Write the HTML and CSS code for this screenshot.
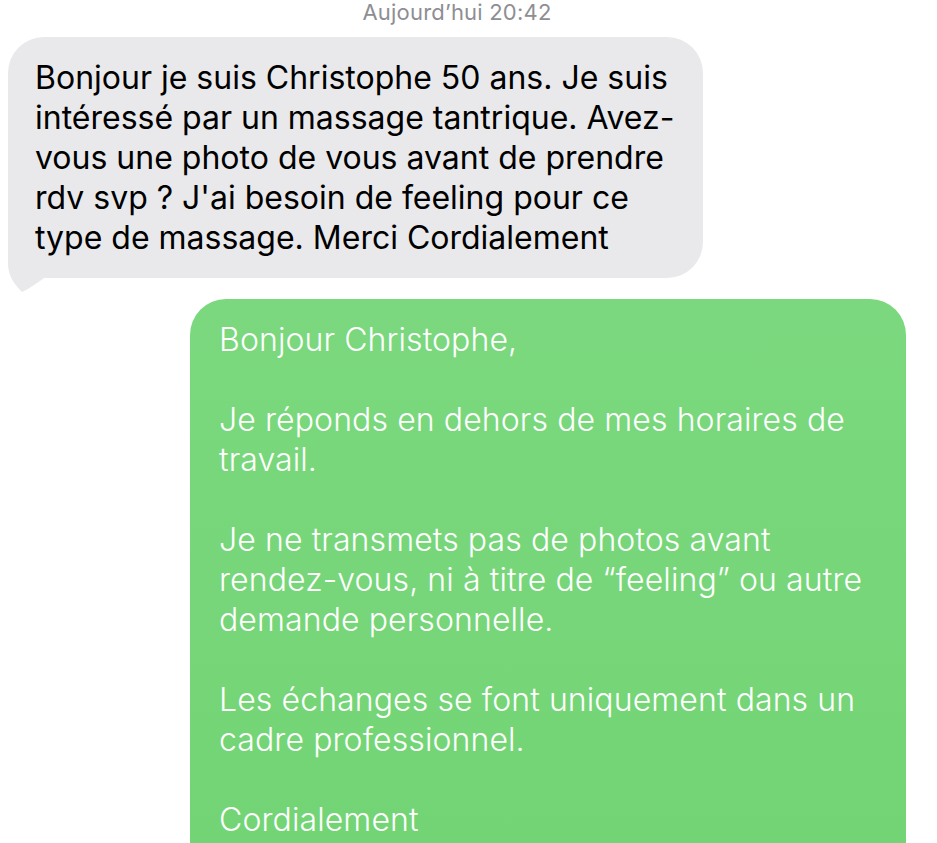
FILE: index.html
```html
<!DOCTYPE html>
<html lang="fr">
<head>
    <meta charset="UTF-8">
    <meta name="viewport" content="width=device-width, initial-scale=1.0">
    <title>Messages</title>
    <link rel="stylesheet" href="styles.css">
</head>
<body>
    <div class="thread">
        <div class="timestamp">Aujourd’hui 20:42</div>

        <div class="bubble received">
            <svg class="tail" width="50" height="40" viewBox="0 0 50 40">
                <path d="M0 0 L0 12 C0 24 7 33 14 40 C21 37 29 31 36 26 L50 26 L50 0 Z" fill="#e9e9eb"/>
            </svg>
            <p>Bonjour je suis Christophe 50 ans. Je suis<br>intéressé par un massage tantrique. Avez-<br>vous une photo de vous avant de prendre<br>rdv svp ? J'ai besoin de feeling pour ce<br>type de massage. Merci Cordialement</p>
        </div>

        <div class="bubble sent">
            <p>Bonjour Christophe,</p>
            <p>Je réponds en dehors de mes horaires de<br>travail.</p>
            <p>Je ne transmets pas de photos avant<br>rendez-vous, ni à titre de “feeling” ou autre<br>demande personnelle.</p>
            <p>Les échanges se font uniquement dans un<br>cadre professionnel.</p>
            <p>Cordialement</p>
        </div>
    </div>
</body>
</html>
```

FILE: styles.css
```css
body {
    margin: 0;
    padding: 0;
    height: 843px;
    overflow: hidden;
    background-color: #fff;
    font-family: 'Inter', 'Noto Sans', sans-serif;
}

.thread {
    display: flex;
    flex-direction: column;
    padding: 0 31px 0 8px;
}

.timestamp {
    align-self: center;
    height: 37px;
    line-height: 25px;
    font-size: 22px;
    color: #8e8e93;
    letter-spacing: 0.2px;
}

.bubble {
    position: relative;
    box-sizing: border-box;
    border-radius: 36px;
    font-size: 32px;
    line-height: 40px;
}

.bubble p {
    position: relative;
    margin: 0;
}

.bubble p + p {
    margin-top: 40px;
}

.received {
    align-self: flex-start;
    width: 695px;
    padding: 21px 10px 20px 27px;
    background-color: #e9e9eb;
    color: #000;
    border-bottom-left-radius: 24px;
}

.tail {
    position: absolute;
    left: 0;
    bottom: -14px;
}

.sent {
    align-self: flex-end;
    width: 716px;
    margin-top: 21px;
    padding: 21px 10px 40px 29px;
    background: linear-gradient(#7bd87e, #72d474);
    color: #fff;
    font-weight: 300;
    letter-spacing: 0.1px;
}
```
